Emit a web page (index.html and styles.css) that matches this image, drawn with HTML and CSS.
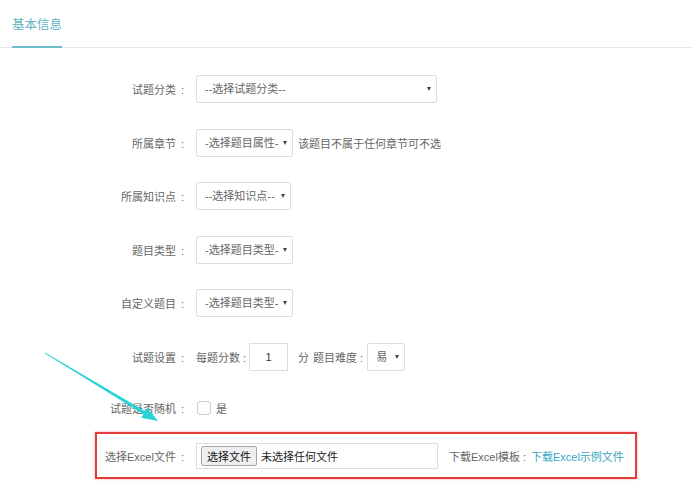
FILE: index.html
```html
<!DOCTYPE html>
<html lang="zh-CN">
<head>
    <meta charset="UTF-8">
    <meta name="viewport" content="width=device-width, initial-scale=1.0">
    <title>基本信息</title>
    <link rel="stylesheet" href="styles.css">
</head>
<body>
    <div class="tabs">
        <span class="tab active">基本信息</span>
    </div>
    <form class="form">
        <div class="row">
            <label class="label">试题分类</label>
            <span class="select wide"><select><option>--选择试题分类--</option></select></span>
        </div>
        <div class="row">
            <label class="label">所属章节</label>
            <span class="select"><select><option>-选择题目属性-</option></select></span>
            <span class="hint">该题目不属于任何章节可不选</span>
        </div>
        <div class="row">
            <label class="label">所属知识点</label>
            <span class="select narrow"><select><option>--选择知识点--</option></select></span>
        </div>
        <div class="row">
            <label class="label">题目类型</label>
            <span class="select"><select><option>-选择题目类型-</option></select></span>
        </div>
        <div class="row">
            <label class="label">自定义题目</label>
            <span class="select"><select><option>-选择题目类型-</option></select></span>
        </div>
        <div class="row">
            <label class="label">试题设置</label>
            <span class="text">每题分数<span class="colon">:</span></span>
            <input class="score" type="text" value="1">
            <span class="text unit">分</span>
            <span class="text level">题目难度<span class="colon">:</span></span>
            <span class="select tiny"><select><option>易</option></select></span>
        </div>
        <div class="row row-check">
            <label class="label">试题是否随机</label>
            <span class="checkbox"></span>
            <span class="text">是</span>
        </div>
        <div class="row row-file">
            <label class="label">选择Excel文件</label>
            <span class="file">
                <button type="button" class="file-btn">选择文件</button>
                <span class="file-name">未选择任何文件</span>
            </span>
            <span class="text download">下载Excel模板<span class="colon">:</span></span>
            <a href="#" class="link">下载Excel示例文件</a>
        </div>
    </form>

    <!-- annotation -->
    <div class="highlight"></div>
    <svg class="arrow" width="692" height="484" viewBox="0 0 692 484">
        <polygon points="45,352.4 145.2,411.2 147.4,407.6 158,421 141.2,417.8 143.4,414.2 45,353.6" fill="#27d3d6"/>
    </svg>
</body>
</html>
```

FILE: styles.css
```css
body {
    margin: 0;
    font-family: "Liberation Sans", "Noto Sans CJK SC", sans-serif;
    font-size: 11px;
    color: #666;
    background-color: #fff;
}
.tabs {
    height: 47px;
    padding-left: 12px;
    border-bottom: 1px solid #e6e6e6;
}
.tab {
    display: inline-block;
    box-sizing: border-box;
    height: 48px;
    line-height: 50px;
    font-size: 12.5px;
    color: #5fb3c4;
    border-bottom: 2px solid #6bbccb;
}
.form {
    padding: 27px 0 0 0;
}
.row {
    display: flex;
    align-items: center;
    height: 28px;
    margin-bottom: 25.6px;
}
.row-check {
    margin-top: -2.6px;
    margin-bottom: 20px;
}
.label {
    width: 100px;
    margin-left: 88px;
    margin-right: 8px;
    text-align: right;
    flex-shrink: 0;
}
.label::after {
    content: ":";
    margin: 0 4px 0 5px;
}
.colon {
    margin: 0 2px 0 3px;
}
.select {
    position: relative;
    display: inline-block;
    width: 97px;
    height: 28px;
}
.select.wide { width: 241px; }
.select.narrow { width: 95px; }
.select.tiny { width: 38px; }
.select select {
    -webkit-appearance: none;
    appearance: none;
    width: 100%;
    height: 100%;
    border: 1px solid #ddd;
    border-radius: 2px;
    background-color: #fff;
    padding: 0 0 0 8px;
    font-family: inherit;
    font-size: 11px;
    color: #666;
    outline: none;
}
.select::after {
    content: "";
    position: absolute;
    right: 6px;
    top: 12px;
    border-left: 2.5px solid transparent;
    border-right: 2.5px solid transparent;
    border-top: 4px solid #444;
}
.hint {
    margin-left: 5px;
}
.text {
    white-space: nowrap;
}
.score {
    box-sizing: border-box;
    width: 39px;
    height: 28px;
    margin-left: 1px;
    border: 1px solid #ddd;
    text-align: center;
    font-family: inherit;
    font-size: 11px;
    color: #333;
    outline: none;
}
.unit {
    margin-left: 10px;
    margin-right: 4px;
}
.level .colon {
    margin-right: 4px;
}
.checkbox {
    display: inline-block;
    width: 12px;
    height: 12px;
    border: 1px solid #ccc;
    border-radius: 3px;
    margin-left: 1px;
    margin-right: 5px;
}
.file {
    box-sizing: border-box;
    display: flex;
    align-items: center;
    width: 242px;
    height: 26px;
    border: 1px solid #ddd;
    padding-left: 4px;
}
.file-btn {
    height: 20px;
    padding: 0 5px;
    border: 1px solid #a6a6a6;
    border-radius: 2px;
    background-color: #efefef;
    font-family: inherit;
    font-size: 11px;
    color: #111;
}
.file-name {
    margin-left: 4px;
    color: #222;
}
.download {
    margin-left: 11px;
}
.download .colon {
    margin-right: 5px;
}
.link {
    color: #3aa6c2;
    text-decoration: none;
}
.highlight {
    position: absolute;
    left: 95px;
    top: 432px;
    width: 538px;
    height: 43px;
    border: 2px solid #e53c3c;
    box-shadow: 0 0 2px rgba(229, 60, 60, 0.5);
    pointer-events: none;
}
.arrow {
    position: absolute;
    left: 0;
    top: 0;
    pointer-events: none;
}
```
